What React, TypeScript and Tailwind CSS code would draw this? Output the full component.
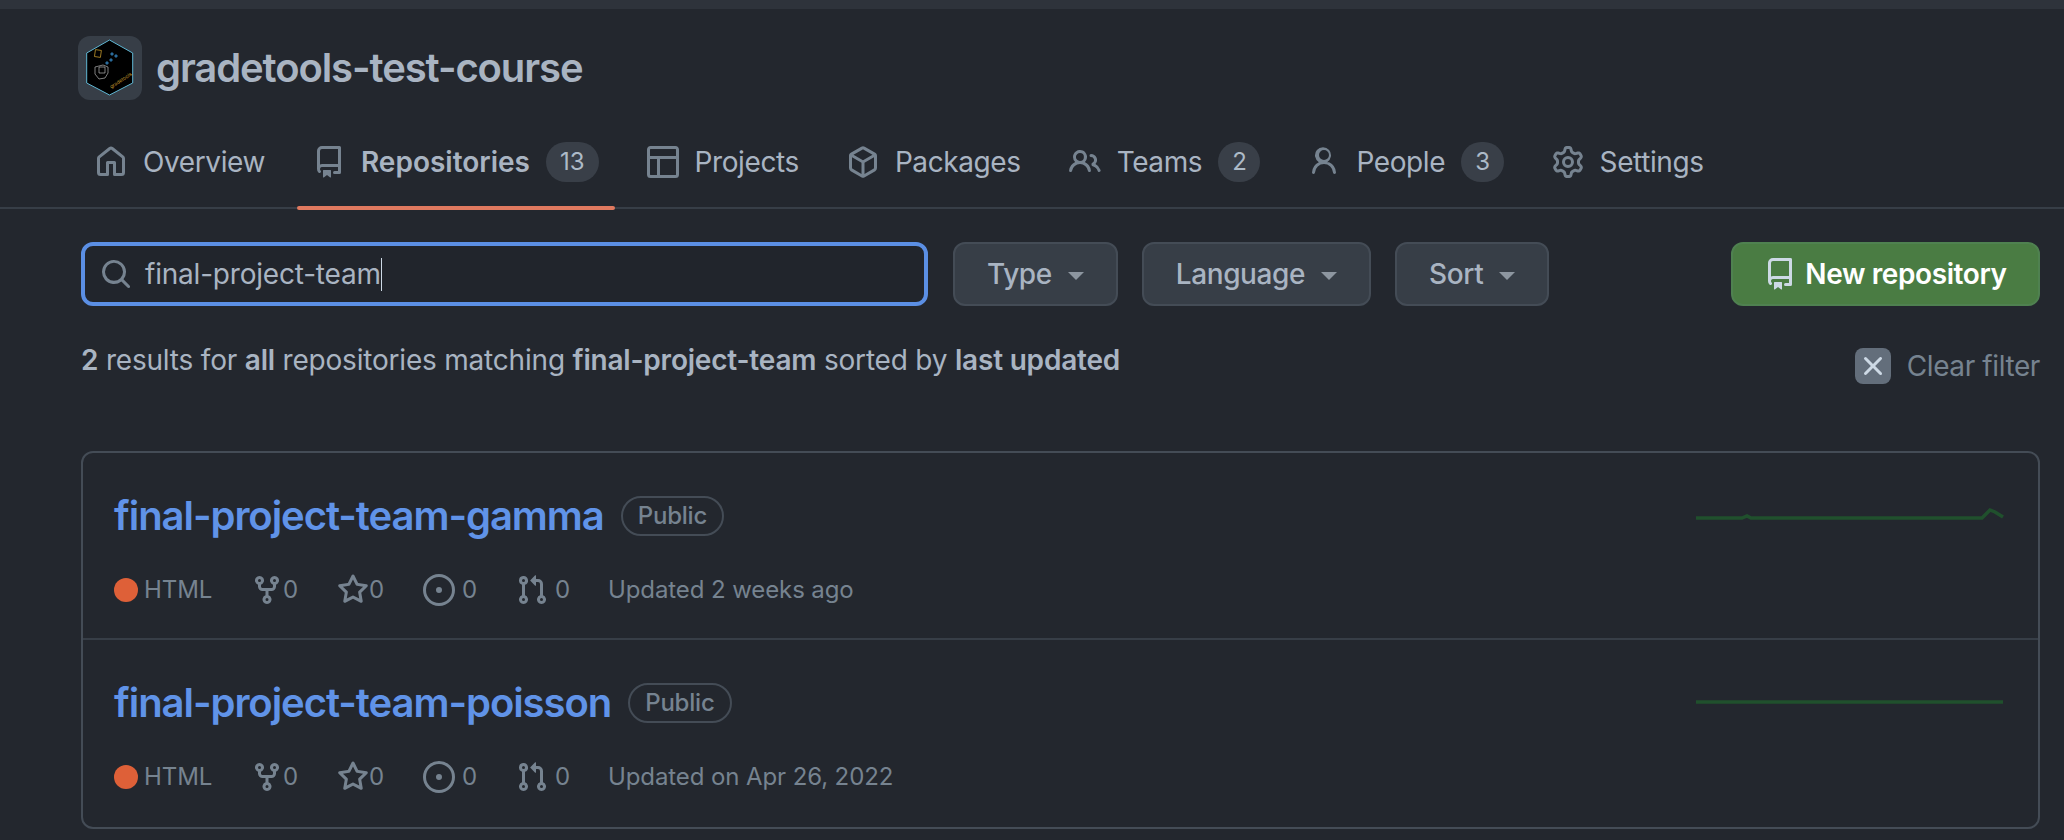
import type { ReactNode } from "react";

// octicons, 16px grid
const paths = {
  home: "M6.906.664a1.749 1.749 0 0 1 2.187 0l5.25 4.2c.415.332.657.835.657 1.367v7.019A1.75 1.75 0 0 1 13.25 15h-3.5a.75.75 0 0 1-.75-.75V9H7v5.25a.75.75 0 0 1-.75.75h-3.5A1.75 1.75 0 0 1 1 13.25V6.23c0-.531.242-1.034.657-1.366l5.25-4.2Zm1.25 1.171a.25.25 0 0 0-.312 0l-5.25 4.2a.25.25 0 0 0-.094.196v7.019c0 .138.112.25.25.25H5.5V8.25a.75.75 0 0 1 .75-.75h3.5a.75.75 0 0 1 .75.75v5.25h2.75a.25.25 0 0 0 .25-.25V6.23a.25.25 0 0 0-.094-.195Z",
  repo: "M2 2.5A2.5 2.5 0 0 1 4.5 0h8.75a.75.75 0 0 1 .75.75v12.5a.75.75 0 0 1-.75.75h-2.5a.75.75 0 0 1 0-1.5h1.75v-2h-8a1 1 0 0 0-.714 1.7.75.75 0 1 1-1.072 1.05A2.495 2.495 0 0 1 2 11.5Zm10.5-1h-8a1 1 0 0 0-1 1v6.708A2.486 2.486 0 0 1 4.5 9h8ZM5 12.25a.25.25 0 0 1 .25-.25h3.5a.25.25 0 0 1 .25.25v3.25a.25.25 0 0 1-.4.2l-1.45-1.087a.249.249 0 0 0-.3 0L5.4 15.7a.25.25 0 0 1-.4-.2Z",
  table: "M0 1.75C0 .784.784 0 1.75 0h12.5C15.216 0 16 .784 16 1.75v12.5A1.75 1.75 0 0 1 14.25 16H1.75A1.75 1.75 0 0 1 0 14.25ZM6.5 6.5v8h7.75a.25.25 0 0 0 .25-.25V6.5ZM5 14.5v-8H1.5v7.75c0 .138.112.25.25.25Zm9.5-9.5V1.75a.25.25 0 0 0-.25-.25H1.75a.25.25 0 0 0-.25.25V5Z",
  pkg: "m8.878.392 5.25 3.045c.54.314.872.89.872 1.514v6.098a1.75 1.75 0 0 1-.872 1.514l-5.25 3.045a1.75 1.75 0 0 1-1.756 0l-5.25-3.045A1.75 1.75 0 0 1 1 11.049V4.951c0-.624.332-1.201.872-1.514L7.122.392a1.75 1.75 0 0 1 1.756 0ZM7.875 1.69l-4.63 2.685L8 7.133l4.755-2.758-4.63-2.685a.248.248 0 0 0-.25 0ZM2.5 5.677v5.372c0 .09.047.171.125.216l4.625 2.683V8.432Zm6.25 8.271 4.625-2.683a.25.25 0 0 0 .125-.216V5.677L8.75 8.432Z",
  people: "M2 5.5a3.5 3.5 0 1 1 5.898 2.549 5.508 5.508 0 0 1 3.034 4.084.75.75 0 1 1-1.482.235 4 4 0 0 0-7.9 0 .75.75 0 0 1-1.482-.236A5.507 5.507 0 0 1 3.102 8.05 3.493 3.493 0 0 1 2 5.5ZM11 4a3.001 3.001 0 0 1 2.22 5.018 5.01 5.01 0 0 1 2.56 3.012.749.749 0 0 1-.885.954.752.752 0 0 1-.549-.514 3.507 3.507 0 0 0-2.522-2.372.75.75 0 0 1-.574-.73v-.352a.75.75 0 0 1 .416-.672A1.5 1.5 0 0 0 11 5.5.75.75 0 0 1 11 4Zm-5.5-.5a2 2 0 1 0-.001 3.999A2 2 0 0 0 5.5 3.5Z",
  person: "M10.561 8.073a6.005 6.005 0 0 1 3.432 5.142.75.75 0 1 1-1.498.07 4.5 4.5 0 0 0-8.99 0 .75.75 0 0 1-1.498-.07 6.004 6.004 0 0 1 3.431-5.142 3.999 3.999 0 1 1 4.123 0ZM10.5 4.5a2.5 2.5 0 1 0-5 0 2.5 2.5 0 0 0 5 0Z",
  gear: "M8 0a8.2 8.2 0 0 1 .701.031C9.444.095 9.99.645 10.16 1.29l.288 1.107c.018.066.079.158.212.224.231.114.454.243.668.386.123.082.233.09.299.071l1.103-.303c.644-.176 1.392.021 1.82.63.27.385.506.792.704 1.218.315.675.111 1.422-.364 1.891l-.814.806c-.049.048-.098.147-.088.294.016.257.016.515 0 .772-.01.147.038.246.088.294l.814.806c.475.469.679 1.216.364 1.891a7.977 7.977 0 0 1-.704 1.217c-.428.61-1.176.807-1.82.63l-1.102-.302c-.067-.019-.177-.011-.3.071a5.909 5.909 0 0 1-.668.386c-.133.066-.194.158-.211.224l-.29 1.106c-.168.646-.715 1.196-1.458 1.26a8.006 8.006 0 0 1-1.402 0c-.743-.064-1.289-.614-1.458-1.26l-.289-1.106c-.018-.066-.079-.158-.212-.224a5.738 5.738 0 0 1-.668-.386c-.123-.082-.233-.09-.299-.071l-1.103.303c-.644.176-1.392-.021-1.82-.63a8.12 8.12 0 0 1-.704-1.218c-.315-.675-.111-1.422.363-1.891l.815-.806c.05-.048.098-.147.088-.294a6.214 6.214 0 0 1 0-.772c.01-.147-.038-.246-.088-.294l-.815-.806C.635 6.045.431 5.298.746 4.623a7.92 7.92 0 0 1 .704-1.217c.428-.61 1.176-.807 1.82-.63l1.102.302c.067.019.177.011.3-.071.214-.143.437-.272.668-.386.133-.066.194-.158.211-.224l.29-1.106C6.009.645 6.556.095 7.299.03 7.53.01 7.764 0 8 0Zm-.571 1.525c-.036.003-.108.036-.137.146l-.289 1.105c-.147.561-.549.967-.998 1.189-.173.086-.34.183-.5.29-.417.278-.97.423-1.529.27l-1.103-.303c-.109-.03-.175.016-.195.045-.22.312-.412.644-.573.99-.014.031-.021.11.059.19l.815.806c.411.406.562.957.53 1.456a4.709 4.709 0 0 0 0 .582c.032.499-.119 1.05-.53 1.456l-.815.806c-.081.08-.073.159-.059.19.162.346.353.677.573.989.02.03.085.076.195.046l1.102-.303c.56-.153 1.113-.008 1.53.27.161.107.328.204.501.29.447.222.85.629.997 1.189l.289 1.105c.029.109.101.143.137.146a6.6 6.6 0 0 0 1.142 0c.036-.003.108-.036.137-.146l.289-1.105c.147-.561.549-.967.998-1.189.173-.086.34-.183.5-.29.417-.278.97-.423 1.529-.27l1.103.303c.109.029.175-.016.195-.045.22-.313.411-.644.573-.99.014-.031.021-.11-.059-.19l-.815-.806c-.411-.406-.562-.957-.53-1.456a4.709 4.709 0 0 0 0-.582c-.032-.499.119-1.05.53-1.456l.815-.806c.081-.08.073-.159.059-.19a6.464 6.464 0 0 0-.573-.989c-.02-.03-.085-.076-.195-.046l-1.102.303c-.56.153-1.113.008-1.53-.27a4.44 4.44 0 0 0-.501-.29c-.447-.222-.85-.629-.997-1.189l-.289-1.105c-.029-.11-.101-.143-.137-.146a6.6 6.6 0 0 0-1.142 0ZM11 8a3 3 0 1 1-6 0 3 3 0 0 1 6 0ZM9.5 8a1.5 1.5 0 1 0-3.001.001A1.5 1.5 0 0 0 9.5 8Z",
  fork: "M5 5.372v.878c0 .414.336.75.75.75h4.5a.75.75 0 0 0 .75-.75v-.878a2.25 2.25 0 1 1 1.5 0v.878a2.25 2.25 0 0 1-2.25 2.25h-1.5v2.128a2.251 2.251 0 1 1-1.5 0V8.5h-1.5A2.25 2.25 0 0 1 3.5 6.25v-.878a2.25 2.25 0 1 1 1.5 0ZM5 3.25a.75.75 0 1 0-1.5 0 .75.75 0 0 0 1.5 0Zm6.75.75a.75.75 0 1 0 0-1.5.75.75 0 0 0 0 1.5Zm-3 8.75a.75.75 0 1 0-1.5 0 .75.75 0 0 0 1.5 0Z",
  star: "M8 .25a.75.75 0 0 1 .673.418l1.882 3.815 4.21.612a.75.75 0 0 1 .416 1.279l-3.046 2.97.719 4.192a.751.751 0 0 1-1.088.791L8 12.347l-3.766 1.98a.75.75 0 0 1-1.088-.79l.72-4.194L.818 6.374a.75.75 0 0 1 .416-1.28l4.21-.611L7.327.668A.75.75 0 0 1 8 .25Zm0 2.445L6.615 5.5a.75.75 0 0 1-.564.41l-3.097.45 2.24 2.184a.75.75 0 0 1 .216.664l-.528 3.084 2.769-1.456a.75.75 0 0 1 .698 0l2.77 1.456-.53-3.084a.75.75 0 0 1 .216-.664l2.24-2.183-3.096-.45a.75.75 0 0 1-.564-.41L8 2.694Z",
  issue: "M8 9.5a1.5 1.5 0 1 0 0-3 1.5 1.5 0 0 0 0 3ZM8 0a8 8 0 1 1 0 16A8 8 0 0 1 8 0ZM1.5 8a6.5 6.5 0 1 0 13 0 6.5 6.5 0 0 0-13 0Z",
  pull: "M1.5 3.25a2.25 2.25 0 1 1 3 2.122v5.256a2.251 2.251 0 1 1-1.5 0V5.372A2.25 2.25 0 0 1 1.5 3.25Zm5.677-.177L9.573.677A.25.25 0 0 1 10 .854V2.5h1A2.5 2.5 0 0 1 13.5 5v5.628a2.251 2.251 0 1 1-1.5 0V5a1 1 0 0 0-1-1h-1v1.646a.25.25 0 0 1-.427.177L7.177 3.427a.25.25 0 0 1 0-.354ZM3.75 2.5a.75.75 0 1 0 0 1.5.75.75 0 0 0 0-1.5Zm0 9.5a.75.75 0 1 0 0 1.5.75.75 0 0 0 0-1.5Zm8.25.75a.75.75 0 1 0 1.5 0 .75.75 0 0 0-1.5 0Z",
  search: "M10.68 11.74a6 6 0 0 1-7.922-8.982 6 6 0 0 1 8.982 7.922l3.04 3.04a.749.749 0 0 1-.326 1.275.749.749 0 0 1-.734-.215ZM11.5 7a4.499 4.499 0 1 0-8.997 0A4.499 4.499 0 0 0 11.5 7Z",
  x: "M3.72 3.72a.75.75 0 0 1 1.06 0L8 6.94l3.22-3.22a.749.749 0 0 1 1.275.326.749.749 0 0 1-.215.734L9.06 8l3.22 3.22a.749.749 0 0 1-.326 1.275.749.749 0 0 1-.734-.215L8 9.06l-3.22 3.22a.751.751 0 0 1-1.042-.018.751.751 0 0 1-.018-1.042L6.94 8 3.72 4.78a.75.75 0 0 1 0-1.06Z",
};

function Octicon({ name, className }: { name: keyof typeof paths; className?: string }) {
  return (
    <svg viewBox="0 0 16 16" fill="currentColor" className={`w-8 h-8 shrink-0 ${className ?? ""}`}>
      <path fillRule="evenodd" d={paths[name]} />
    </svg>
  );
}

function Logo() {
  return (
    <div className="w-16 h-16 rounded-xl bg-[#373e47] shrink-0">
      <svg viewBox="0 0 64 64" className="w-16 h-16">
        <polygon points="31.5,4 54.7,17 54.7,47 31.5,59 8.7,47 8.7,17" fill="#000" stroke="#5fb7d4" strokeWidth="1" />
        <rect x="17" y="14" width="6" height="7" fill="none" stroke="#b8902a" strokeWidth="0.8" transform="rotate(8 20 17)" />
        <path d="M34 16l2 2-2 2-2-2zM38 18l2 2-2 2-2-2zM33 22l2 2-2 2-2-2zM29 25l2 2-2 2-2-2z" fill="#2a6c9c" />
        <path d="M17 31l8-2 5 2 0 6-3 5-6 1-4-5 0-5zM21 31h6v6h-6z" fill="none" stroke="#b5b5b5" strokeWidth="0.7" />
        <text x="30" y="50" fontSize="5" fontFamily="Inter, sans-serif" fill="#c49a2e" transform="rotate(-33 36 46)">gradetools</text>
      </svg>
    </div>
  );
}

function Badge({ children }: { children: ReactNode }) {
  return (
    <span className="flex items-center justify-center h-10 px-[14px] rounded-full bg-[#393f48] text-[#adbac7] text-[24px] font-normal">
      {children}
    </span>
  );
}

function NavItem({
  icon,
  label,
  count,
  active,
}: {
  icon: keyof typeof paths;
  label: string;
  count?: string;
  active?: boolean;
}) {
  return (
    <div className={`relative flex items-center gap-4 px-4 h-10 text-[#a9b4c2] ${active ? "font-semibold" : "tracking-[-0.4px]"}`}>
      <Octicon name={icon} className="text-[#768390]" />
      <span>{label}</span>
      {count && <Badge>{count}</Badge>}
      {active && (
        <span className="absolute left-0 right-0 top-[64px] h-1 rounded-sm bg-[#e0795f]" />
      )}
    </div>
  );
}

function FilterButton({ label }: { label: string }) {
  return (
    <button className="flex items-center h-16 px-[32px] gap-[16px] rounded-xl border-2 border-[#444c56] bg-[#373e47] text-[#a9b4c2] text-[28px] font-medium tracking-[-0.4px]">
      {label}
      <span className="w-0 h-0 border-x-[8px] border-x-transparent border-t-[8px] border-t-[#8d96a0] mt-1" />
    </button>
  );
}

function Sparkline({ points }: { points: string }) {
  return (
    <svg viewBox="0 0 310 30" className="w-[310px] h-[30px] shrink-0">
      <polyline points={points} fill="none" stroke="#20502d" strokeWidth="3.5" />
    </svg>
  );
}

function RepoRow({
  name,
  updated,
  points,
  last,
}: {
  name: string;
  updated: string;
  points: string;
  last?: boolean;
}) {
  return (
    <div className={`flex justify-between pl-[31px] pr-8 h-[187px] pt-[43px] ${last ? "" : "border-b-2 border-[#373e47]"}`}>
      <div className="flex flex-col">
        <div className="flex items-center gap-[17px] h-10">
          <span className="text-[40px] font-semibold text-[#6093e8] tracking-[-1.05px]">{name}</span>
          <span className="flex items-center h-10 px-[15px] rounded-full border-2 border-[#444c56] text-[24px] font-medium text-[#768390] tracking-[-0.2px]">
            Public
          </span>
        </div>
        <div className="flex items-center mt-[34px] h-10 text-[24px] text-[#768390] tracking-[-0.1px]">
          <span className="w-6 h-6 rounded-full bg-[#de6038] mr-[6px]" />
          <span className="w-[107px]">HTML</span>
          <span className="flex items-center w-[86px]">
            <Octicon name="fork" />0
          </span>
          <span className="flex items-center w-[86px]">
            <Octicon name="star" />0
          </span>
          <span className="flex items-center gap-[7px] w-[93px]">
            <Octicon name="issue" />0
          </span>
          <span className="flex items-center gap-[7px] w-[92px]">
            <Octicon name="pull" />0
          </span>
          <span>{updated}</span>
        </div>
      </div>
      <div className="pt-[2px]">
        <Sparkline points={points} />
      </div>
    </div>
  );
}

export default function App() {
  return (
    <div className="w-[2064px] h-[840px] overflow-hidden bg-[#23272e] font-['Inter',sans-serif]">
      <div className="h-[9px] bg-[#2e333b]" />

      {/* Org header */}
      <div className="flex items-center gap-[14px] pl-[78px] pt-[27px]">
        <Logo />
        <h1 className="text-[40px] font-semibold text-[#a9b4c2] tracking-[-1.1px]">gradetools-test-course</h1>
      </div>

      {/* Nav */}
      <nav className="flex items-center gap-4 pl-[79px] h-[109px] pt-6 pb-[7px] border-b-2 border-[#373e47] text-[28px]">
        <NavItem icon="home" label="Overview" />
        <NavItem icon="repo" label="Repositories" count="13" active />
        <NavItem icon="table" label="Projects" />
        <NavItem icon="pkg" label="Packages" />
        <NavItem icon="people" label="Teams" count="2" />
        <NavItem icon="person" label="People" count="3" />
        <NavItem icon="gear" label="Settings" />
      </nav>

      <div className="pl-[81px] pr-6">
        {/* Filters */}
        <div className="flex items-center mt-[33px]">
          <div className="flex items-center w-[847px] h-16 rounded-xl border-4 border-[#5b8fe4] bg-[#21252c] pl-[15px] gap-[13px]">
            <Octicon name="search" className="text-[#768390]" />
            <span className="text-[28px] text-[#a9b4c2] border-r border-[#cdd9e5] leading-[33px] tracking-[-0.2px]">final-project-team</span>
          </div>
          <div className="flex gap-6 ml-[25px]">
            <FilterButton label="Type" />
            <FilterButton label="Language" />
            <FilterButton label="Sort" />
          </div>
          <button className="ml-auto flex items-center justify-center gap-[9px] w-[309px] h-16 rounded-xl border-2 border-[#4f8150] bg-[#4a7c43] text-[28px] font-semibold text-white tracking-[-0.4px]">
            <Octicon name="repo" className="text-[#cdd9e5]" />
            New repository
          </button>
        </div>

        {/* Result summary */}
        <div className="flex justify-between items-start mt-[33px] text-[28px] text-[#a9b4c2] tracking-[-0.2px]">
          <p className="leading-[42px]">
            <b className="font-semibold">2</b> results for <b className="font-semibold">all</b> repositories matching{" "}
            <b className="font-semibold">final-project-team</b> sorted by <b className="font-semibold">last updated</b>
          </p>
          <div className="flex items-center gap-4 mt-[6px] text-[#768390] tracking-[-0.4px]">
            <span className="flex items-center justify-center w-9 h-9 rounded-lg bg-[#636e7b] text-[#cdd9e5]">
              <Octicon name="x" />
            </span>
            Clear filter
          </div>
        </div>

        {/* Repo list */}
        <div className="mt-[64px] h-[378px] rounded-xl border-2 border-[#444c56]">
          <RepoRow
            name="final-project-team-gamma"
            updated="Updated 2 weeks ago"
            points="0,20 46,20 51,18 55,20 286,20 294,12 299,14 307,19"
          />
          <RepoRow
            name="final-project-team-poisson"
            updated="Updated on Apr 26, 2022"
            points="0,17 307,17"
            last
          />
        </div>
      </div>
    </div>
  );
}
